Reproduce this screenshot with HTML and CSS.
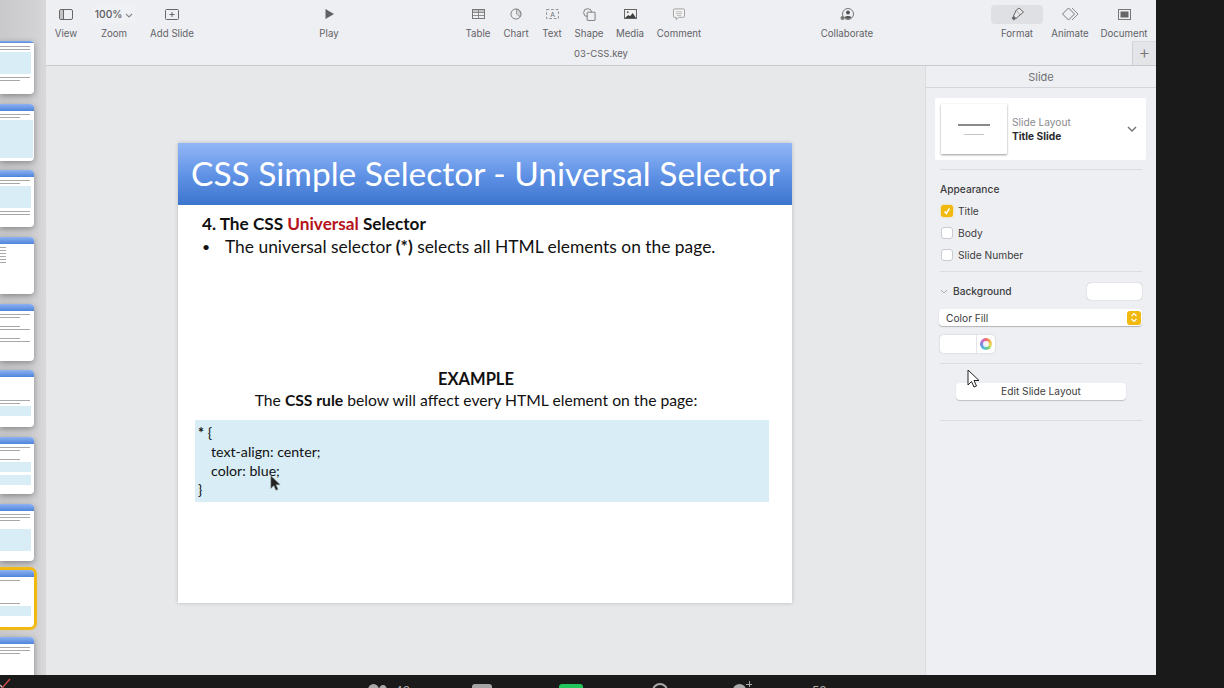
FILE: index.html
```html
<!DOCTYPE html>
<html>
<head>
    <title>03-CSS.key</title>
    <link rel="stylesheet" href="styles.css">
</head>
<body>
<div class="app">
    <!-- Slide navigator, thumbnails are cut off by the window on the left -->
    <div class="navigator">
        <div class="thumb thumb-first">
            <div class="thumb-head"></div>
            <div class="thumb-line"></div><div class="thumb-line"></div>
            <div class="thumb-box thumb-box-tall"></div>
            <div class="thumb-line"></div><div class="thumb-line short"></div>
        </div>
        <div class="thumb">
            <div class="thumb-head"></div>
            <div class="thumb-line"></div><div class="thumb-line short"></div>
            <div class="thumb-box thumb-box-big"></div>
        </div>
        <div class="thumb">
            <div class="thumb-head"></div>
            <div class="thumb-line"></div><div class="thumb-line short"></div>
            <div class="thumb-box thumb-box-tall"></div>
            <div class="thumb-line"></div><div class="thumb-line"></div>
        </div>
        <div class="thumb">
            <div class="thumb-head"></div>
            <div class="thumb-line tiny"></div><div class="thumb-line tiny"></div><div class="thumb-line tiny"></div>
            <div class="thumb-line tiny"></div><div class="thumb-line tiny"></div><div class="thumb-line tiny"></div>
        </div>
        <div class="thumb">
            <div class="thumb-head"></div>
            <div class="thumb-line"></div><div class="thumb-line short"></div>
            <div class="thumb-gap"></div>
            <div class="thumb-line short"></div><div class="thumb-line"></div>
            <div class="thumb-gap"></div>
            <div class="thumb-line short"></div><div class="thumb-line"></div>
        </div>
        <div class="thumb">
            <div class="thumb-head"></div>
            <div class="thumb-gap-big"></div>
            <div class="thumb-line"></div><div class="thumb-line short"></div>
            <div class="thumb-box thumb-box-small"></div>
        </div>
        <div class="thumb">
            <div class="thumb-head"></div>
            <div class="thumb-line"></div><div class="thumb-line short"></div>
            <div class="thumb-gap"></div>
            <div class="thumb-line short"></div>
            <div class="thumb-box thumb-box-small"></div>
            <div class="thumb-box thumb-box-small"></div>
        </div>
        <div class="thumb">
            <div class="thumb-head"></div>
            <div class="thumb-line"></div><div class="thumb-line"></div><div class="thumb-line short"></div>
            <div class="thumb-gap"></div>
            <div class="thumb-box thumb-box-tall"></div>
        </div>
        <div class="thumb thumb-selected">
            <div class="thumb-head"></div>
            <div class="thumb-line short"></div>
            <div class="thumb-gap-big"></div>
            <div class="thumb-line short"></div>
            <div class="thumb-box thumb-box-small"></div>
        </div>
        <div class="thumb">
            <div class="thumb-head"></div>
            <div class="thumb-line"></div><div class="thumb-line"></div><div class="thumb-line short"></div>
        </div>
    </div>

    <div class="work">
        <div class="toolbar">
            <div class="tools">
                <div class="tool tool-view">
                    <svg width="14" height="11" viewBox="0 0 14 11"><rect x=".5" y=".5" width="13" height="10" rx="1.5" fill="none" stroke="#666"/><rect x="1" y="1" width="3.5" height="9" fill="#c4c4c6"/><path d="M4.500 1v9" stroke="#666"/></svg>
                    <span>View</span>
                </div>
                <div class="tool tool-zoom">
                    <div class="zoom-box">100% <svg width="8" height="5" viewBox="0 0 8 5"><path d="M1 1l3 3 3-3" fill="none" stroke="#888" stroke-width="1.100"/></svg></div>
                    <span>Zoom</span>
                </div>
                <div class="tool tool-add">
                    <svg width="14" height="11" viewBox="0 0 14 11"><rect x=".5" y=".5" width="13" height="10" rx="1" fill="none" stroke="#666"/><path d="M7 3v5M4.500 5.500h5" stroke="#666"/></svg>
                    <span>Add Slide</span>
                </div>
                <div class="tool tool-play">
                    <svg width="9" height="10" viewBox="0 0 9 10"><path d="M.5 0l8.500 5-8.500 5z" fill="#626266"/></svg>
                    <span>Play</span>
                </div>
                <div class="tool tool-table">
                    <svg width="13" height="10" viewBox="0 0 13 10"><rect x=".5" y=".5" width="12" height="9" fill="none" stroke="#777"/><rect x="1" y="1" width="11" height="2" fill="#c4c4c6"/><path d="M.5 3.500h12M.5 6.500h12M6.500 .5v9" stroke="#777" stroke-width=".8"/></svg>
                    <span>Table</span>
                </div>
                <div class="tool tool-chart">
                    <svg width="12" height="12" viewBox="0 0 13 13"><circle cx="6.500" cy="6.500" r="5.500" fill="none" stroke="#777"/><path d="M7 1.500v5l3.600 2.800A5 5 0 0 0 7 1.500z" fill="#d4d4d6" stroke="#777" stroke-width=".7"/></svg>
                    <span>Chart</span>
                </div>
                <div class="tool tool-text">
                    <svg width="13" height="10" viewBox="0 0 14 11"><rect x=".5" y=".5" width="13" height="10" fill="none" stroke="#888" stroke-dasharray="3 2"/><text x="7" y="8.500" font-size="7.500" text-anchor="middle" fill="#666" font-family="Inter">A</text></svg>
                    <span>Text</span>
                </div>
                <div class="tool tool-shape">
                    <svg width="13" height="13" viewBox="0 0 14 14"><circle cx="5" cy="5" r="4.300" fill="none" stroke="#777"/><rect x="4.500" y="4.500" width="8.500" height="9" rx=".5" fill="#eeeff3" stroke="#777"/></svg>
                    <span>Shape</span>
                </div>
                <div class="tool tool-media">
                    <svg width="13" height="10" viewBox="0 0 14 11"><rect x=".5" y=".5" width="13" height="10" fill="#f2f2f2" stroke="#555"/><path d="M1 10l3.500-3.500 2 1.500 3-3.500 3.500 5.500z" fill="#3e3e40"/><circle cx="4" cy="3.500" r="1" fill="#555"/></svg>
                    <span>Media</span>
                </div>
                <div class="tool tool-comment">
                    <svg width="12" height="13" viewBox="0 0 13 13"><path d="M1.500 .5h10a1 1 0 0 1 1 1v7a1 1 0 0 1-1 1H6L3.500 12V9.500h-2a1 1 0 0 1-1-1v-7a1 1 0 0 1 1-1z" fill="#f6f6f6" stroke="#999"/><path d="M3 3.500h7M3 5.500h7M4 7.500h5" stroke="#aaa" stroke-width=".8"/></svg>
                    <span>Comment</span>
                </div>
                <div class="tool tool-collab">
                    <svg width="14" height="13" viewBox="0 0 14 13"><circle cx="8" cy="6" r="5.500" fill="none" stroke="#777"/><circle cx="8" cy="4.500" r="2" fill="#555"/><path d="M4.500 9.500c.5-2 6.500-2 7 0a5 5 0 0 1-7 0z" fill="#555"/><circle cx="2.500" cy="10" r="2" fill="#777"/></svg>
                    <span>Collaborate</span>
                </div>
                <div class="tool tool-format tool-active">
                    <svg width="13" height="14" viewBox="0 0 13 14"><path d="M8 1l4.500 4-3.500 3-4-4.500z" fill="#e8e8ea" stroke="#666"/><path d="M5 3.500L2.500 9 5 11.500 9 8" fill="#e8e8ea" stroke="#666"/><path d="M.5 11l2-2 2.500 2.500-2 2z" fill="#666"/></svg>
                    <span>Format</span>
                </div>
                <div class="tool tool-animate">
                    <svg width="17" height="14" viewBox="0 0 17 14"><path d="M10 1l6 6-6 6" fill="none" stroke="#888"/><path d="M6.500 1l6 6-6 6-6-6z" fill="#eeeff3" stroke="#777"/></svg>
                    <span>Animate</span>
                </div>
                <div class="tool tool-document">
                    <svg width="13" height="11" viewBox="0 0 13 11"><rect x=".5" y=".5" width="12" height="10" fill="none" stroke="#777"/><rect x="2.500" y="2.500" width="8" height="6" fill="#666"/></svg>
                    <span>Document</span>
                </div>
            </div>
            <div class="file-row">
                <div class="file-name">03-CSS.key</div>
                <div class="add-tab">+</div>
            </div>
        </div>

        <div class="main">
            <div class="canvas">
                <div class="slide">
                    <div class="slide-title">CSS Simple Selector - Universal Selector</div>
                    <div class="slide-body">
                        <div class="slide-heading">4. The CSS <span class="red">Universal</span> Selector</div>
                        <div class="slide-bullet"><span class="bullet">•</span><span>The universal selector <b>(*)</b> selects all HTML elements on the page.</span></div>
                        <div class="slide-example">
                            <div class="example-title">EXAMPLE</div>
                            <div class="example-text">The <b>CSS rule</b> below will affect every HTML element on the page:</div>
                        </div>
                        <div class="code-box">
                            <div><b>*</b> {</div>
                            <div class="code-indent">text-align: center;</div>
                            <div class="code-indent">color: blue;</div>
                            <div>}</div>
                        </div>
                    </div>
                </div>
            </div>

            <div class="inspector">
                <div class="panel-title">Slide</div>
                <div class="layout-card">
                    <div class="layout-thumb">
                        <div class="layout-thumb-a"></div>
                        <div class="layout-thumb-b"></div>
                    </div>
                    <div class="layout-names">
                        <div class="layout-label">Slide Layout</div>
                        <div class="layout-name">Title Slide</div>
                    </div>
                    <svg width="10" height="7" viewBox="0 0 10 7"><path d="M1 1l4 4 4-4" fill="none" stroke="#777" stroke-width="1.500"/></svg>
                </div>
                <div class="divider divider-first"></div>

                <div class="section-title">Appearance</div>
                <div class="check-row"><span class="check check-on"><svg width="8" height="8" viewBox="0 0 8 8"><path d="M1.500 4.500l1.800 2L6.500 1.500" fill="none" stroke="#fff" stroke-width="1.500"/></svg></span>Title</div>
                <div class="check-row"><span class="check"></span>Body</div>
                <div class="check-row"><span class="check"></span>Slide Number</div>
                <div class="divider divider-checks"></div>

                <div class="background-row">
                    <svg width="8" height="5" viewBox="0 0 8 5"><path d="M1 1l3 3 3-3" fill="none" stroke="#aaa"/></svg>
                    <span class="section-name">Background</span>
                    <span class="swatch"></span>
                </div>
                <div class="select-box">
                    <span>Color Fill</span>
                    <span class="stepper"><svg width="8" height="11" viewBox="0 0 8 11"><path d="M1.500 4L4 1.500 6.500 4M1.500 7L4 9.500 6.500 7" fill="none" stroke="#fff" stroke-width="1.200"/></svg></span>
                </div>
                <div class="color-well">
                    <span class="well-color"></span>
                    <span class="well-wheel"><span class="wheel"></span></span>
                </div>
                <div class="divider divider-well"></div>
                <div class="edit-button">Edit Slide Layout</div>
                <div class="divider divider-button"></div>
            </div>
        </div>
    </div>
</div>

<!-- Meeting controls, mostly below the edge of the recording -->
<div class="meeting-bar">
    <svg class="slash" width="12" height="13" viewBox="0 0 12 13"><path d="M0 10l3 3" stroke="#bbb" stroke-width="1.500"/><path d="M2 13l8-9" fill="none" stroke="#c9474c" stroke-width="1.500"/></svg>
    <span class="meet-people"></span>
    <span class="meet-count">43</span>
    <span class="meet-gray"></span>
    <span class="meet-green"></span>
    <span class="meet-ring"></span>
    <span class="meet-person"></span>
    <span class="meet-num">58</span>
</div>

<!-- Mouse pointers in the recording -->
<svg class="cursor cursor-panel" width="13" height="19" viewBox="0 0 13 19"><path d="M1 1v15l3.500-3.500 2.500 5.500 2.500-1-2.500-5.500h5z" fill="#fff" stroke="#222"/></svg>
<svg class="cursor cursor-slide" width="11" height="16" viewBox="0 0 13 19"><path d="M1 1v15l3.500-3.500 2.500 5.500 2.500-1-2.500-5.500h5z" fill="#222" stroke="#888" stroke-width=".6"/></svg>
</body>
</html>
```
FILE: styles.css
```css
body {
    margin: 0;
    width: 1224px;
    height: 688px;
    overflow: hidden;
    position: relative;
    background-color: #1a1a1a;
    font-family: Inter, "Liberation Sans", sans-serif;
    color: #333;
}

.app {
    display: flex;
    width: 1156px;
    height: 675px;
    overflow: hidden;
}

/* Slide navigator */
.navigator {
    width: 46px;
    flex-shrink: 0;
    box-sizing: border-box;
    padding-top: 41px;
    display: flex;
    flex-direction: column;
    gap: 9.67px;
    overflow: hidden;
    background: linear-gradient(90deg, #c9c9cb, #d2d2d4 80%, #d9d9dc);
}

.thumb {
    width: 34px;
    height: 57px;
    flex-shrink: 0;
    background-color: #fff;
    border-radius: 0 4px 4px 0;
    box-shadow: 0 2px 6px rgba(0, 0, 0, 0.35);
    overflow: hidden;
}

.thumb > * {
    filter: blur(0.4px);
}

.thumb-first {
    height: 53px;
}

.thumb-selected {
    box-shadow: 0 0 1px 3px #f1b80e;
}

.thumb-head {
    height: 7px;
    margin-bottom: 3px;
    background: linear-gradient(#8db2f3, #4f84da);
}

.thumb-first .thumb-head {
    height: 2px;
}

.thumb-line {
    height: 1px;
    width: 30px;
    margin-bottom: 2px;
    background-color: #a8a8a8;
}

.thumb-line.short {
    width: 20px;
}

.thumb-line.tiny {
    width: 6px;
}

.thumb-gap {
    height: 6px;
}

.thumb-gap-big {
    height: 20px;
}

.thumb-box {
    width: 31px;
    margin-bottom: 3px;
    background-color: #d8edf5;
}

.thumb-box-small {
    height: 10px;
}

.thumb-box-tall {
    height: 22px;
}

.thumb-box-big {
    width: 33px;
    height: 38px;
}

/* Toolbar */
.work {
    flex: 1;
    display: flex;
    flex-direction: column;
    min-width: 0;
}

.toolbar {
    height: 66px;
    box-sizing: border-box;
    flex-shrink: 0;
    background-color: #eeeff3;
    border-bottom: 1px solid #c9cacd;
}

.tools {
    display: flex;
    height: 41px;
}

.tool {
    display: grid;
    grid-template-rows: 18px 14px;
    row-gap: 3px;
    justify-items: center;
    align-items: center;
    flex-shrink: 0;
    height: 41px;
    box-sizing: border-box;
    padding-top: 5px;
    position: relative;
    font-size: 9.700px;
    white-space: nowrap;
    color: #636367;
}

.tool-view { width: 40px; }
.tool-zoom { width: 56px; }
.tool-add { width: 60px; }
.tool-play { width: 40px; margin-left: 107px; }
.tool-table { width: 38px; margin-left: 110px; }
.tool-chart { width: 38px; }
.tool-text { width: 34px; }
.tool-shape { width: 40px; }
.tool-media { width: 42px; }
.tool-comment { width: 56px; }
.tool-collab { width: 70px; margin-left: 105px; }
.tool-format { width: 52px; margin-left: 109px; }
.tool-animate { width: 54px; }
.tool-document { width: 54px; }

.tool-active::before {
    content: "";
    position: absolute;
    top: 5px;
    left: 0;
    width: 52px;
    height: 19px;
    border-radius: 4px;
    background-color: #dfe0e4;
}

.tool-active > * {
    position: relative;
}

.zoom-box {
    width: 42px;
    height: 18px;
    border-radius: 3px;
    background-color: #f0f1f4;
    font-size: 10.300px;
    font-weight: 500;
    line-height: 18px;
    text-align: center;
    color: #5a5a5e;
}

.file-row {
    height: 24px;
    display: flex;
    justify-content: center;
    position: relative;
}

.file-name {
    font-size: 9.500px;
    line-height: 25px;
    color: #636367;
}

.add-tab {
    position: absolute;
    right: 0;
    top: 0;
    width: 24px;
    height: 24px;
    box-sizing: border-box;
    border-left: 1px solid #cfd0d3;
    border-top: 1px solid #d8d9dc;
    background-color: #e4e5e9;
    font-size: 18px;
    font-weight: 300;
    line-height: 22px;
    text-align: center;
    color: #777;
}

/* Canvas and slide */
.main {
    flex: 1;
    display: flex;
    min-height: 0;
}

.canvas {
    width: 879px;
    flex-shrink: 0;
    box-sizing: border-box;
    padding-top: 77px;
    background-color: #e6e8ea;
}

.slide {
    width: 614px;
    height: 460px;
    margin-left: 132px;
    background-color: #fff;
    box-shadow: 0 0 4px rgba(0, 0, 0, 0.2);
    font-family: Lato, "Open Sans", sans-serif;
    color: #111;
}

.slide-title {
    height: 62px;
    box-sizing: border-box;
    padding-left: 13px;
    background: linear-gradient(#93b7f7, #5d90e4 55%, #3c75cd);
    color: #fff;
    font-size: 33.500px;
    line-height: 60px;
    white-space: nowrap;
}

.slide-body {
    padding: 9px 0 0 17px;
}

.slide-heading {
    margin-left: 7px;
    font-size: 17.200px;
    font-weight: 700;
    line-height: 19px;
}

.red {
    color: #b5121b;
}

.slide-bullet {
    display: flex;
    margin: 4px 0 0 7px;
    font-size: 17.400px;
    line-height: 20px;
    white-space: nowrap;
}

.bullet {
    width: 23px;
    font-size: 14px;
}

.slide-example {
    width: 562px;
    margin-top: 112px;
    text-align: center;
}

.example-title {
    font-size: 16.500px;
    font-weight: 700;
    line-height: 20px;
}

.example-text {
    margin-top: 1px;
    font-size: 15.700px;
    line-height: 20px;
    white-space: nowrap;
}

.code-box {
    width: 574px;
    height: 82px;
    box-sizing: border-box;
    margin-top: 10px;
    padding: 3px 0 0 3px;
    background-color: #d8edf5;
    font-size: 14.200px;
    line-height: 19px;
}

.code-indent {
    padding-left: 13px;
}

/* Inspector */
.inspector {
    flex: none;
    width: 231px;
    box-sizing: border-box;
    padding: 0 14px;
    background-color: #eeeff3;
    border-left: 1px solid #dcdde0;
    font-size: 10.200px;
    color: #3c3c40;
}

.panel-title {
    height: 21px;
    margin: 0 -14px;
    border-bottom: 1px solid #d4d5d8;
    font-size: 11px;
    line-height: 22px;
    text-align: center;
    color: #707074;
}

.layout-card {
    display: flex;
    align-items: center;
    width: 211px;
    height: 62px;
    box-sizing: border-box;
    margin: 10px 0 0 -5px;
    padding: 0 9px 0 6px;
    background-color: #fff;
    border-radius: 2px;
}

.layout-thumb {
    width: 66px;
    height: 50px;
    flex-shrink: 0;
    box-sizing: border-box;
    padding-top: 20px;
    background-color: #fff;
    box-shadow: 0 1px 2px rgba(0, 0, 0, 0.4);
}

.layout-thumb-a {
    width: 32px;
    height: 2px;
    margin: 0 auto 8px;
    background-color: #8a8a8a;
}

.layout-thumb-b {
    width: 20px;
    height: 1px;
    margin: 0 auto;
    background-color: #c4c4c4;
}

.layout-names {
    flex: 1;
    margin-left: 5px;
    line-height: 14px;
}

.layout-label {
    color: #8a8a8e;
}

.layout-name {
    font-weight: 700;
    color: #2a2a2e;
}

.divider {
    height: 1px;
    background-color: #dcdde0;
}

.divider-first {
    margin-top: 9px;
}

.section-title {
    margin-top: 12px;
    font-weight: 500;
    line-height: 14px;
}

.check-row {
    display: flex;
    align-items: center;
    gap: 5px;
    height: 22px;
}

.section-title + .check-row {
    margin-top: 4px;
}

.check {
    display: flex;
    align-items: center;
    justify-content: center;
    width: 12px;
    height: 12px;
    box-sizing: border-box;
    margin-left: 1px;
    border: 1px solid #c9cacd;
    border-radius: 3px;
    background-color: #fff;
}

.check-on {
    border: none;
    background-color: #f1b80e;
    box-shadow: 0 0 2px rgba(241, 184, 14, 0.7);
}

.divider-checks {
    margin-top: 5px;
}

.background-row {
    display: flex;
    align-items: center;
    height: 18px;
    margin-top: 10px;
}

.section-name {
    flex: 1;
    margin-left: 5px;
    font-weight: 500;
}

.swatch {
    width: 55px;
    height: 17px;
    border-radius: 4px;
    background-color: #fff;
    box-shadow: 0 0 1px rgba(0, 0, 0, 0.4);
}

.select-box {
    display: flex;
    align-items: center;
    justify-content: space-between;
    width: 203px;
    height: 17px;
    box-sizing: border-box;
    margin: 9px 0 0 -1px;
    padding: 0 1px 0 7px;
    border-radius: 4px;
    background-color: #fff;
    box-shadow: 0 1px 1px rgba(0, 0, 0, 0.25);
}

.stepper {
    display: flex;
    align-items: center;
    justify-content: center;
    width: 14px;
    height: 14px;
    border-radius: 3px;
    background-color: #f1b80e;
}

.color-well {
    display: flex;
    width: 55px;
    height: 18px;
    margin-top: 9px;
    border-radius: 4px;
    background-color: #fff;
    box-shadow: 0 0 2px rgba(0, 0, 0, 0.2);
}

.well-color {
    width: 36px;
    border-right: 1px solid #e4e4e6;
}

.well-wheel {
    flex: 1;
    display: flex;
    align-items: center;
    justify-content: center;
}

.wheel {
    display: flex;
    align-items: center;
    justify-content: center;
    width: 12px;
    height: 12px;
    border-radius: 50%;
    background: conic-gradient(#f0686b, #f2b04d, #e7de5a, #76d07a, #59c3dc, #6f8ee8, #c06fd8, #f0686b);
}

.wheel::after {
    content: "";
    width: 6px;
    height: 6px;
    border-radius: 50%;
    background-color: #f4f4f6;
}

.divider-well {
    margin-top: 10px;
}

.edit-button {
    width: 170px;
    height: 17px;
    margin: 19px 0 0 16px;
    border-radius: 4px;
    background-color: #fff;
    box-shadow: 0 1px 1px rgba(0, 0, 0, 0.2);
    line-height: 17px;
    text-align: center;
}

.divider-button {
    margin-top: 20px;
}

/* Meeting bar */
.meeting-bar {
    height: 13px;
    position: relative;
    overflow: hidden;
    background-color: #1a1a1a;
    font-size: 12px;
    color: #aaa;
}

.slash {
    position: absolute;
    left: 0;
    top: 0;
}

.meet-people,
.meet-gray,
.meet-green,
.meet-ring,
.meet-person {
    position: absolute;
    top: 9px;
    height: 12px;
}

.meet-people {
    left: 368px;
    width: 11px;
    border-radius: 50%;
    background-color: #a8a8a8;
}

.meet-people::after {
    content: "";
    position: absolute;
    left: 11px;
    top: 1px;
    width: 8px;
    height: 10px;
    border-radius: 50%;
    background-color: #a8a8a8;
}

.meet-count {
    position: absolute;
    left: 395px;
    top: 9px;
    line-height: 14px;
}

.meet-gray {
    left: 472px;
    width: 20px;
    border-radius: 3px;
    background-color: #a4a4a4;
}

.meet-green {
    left: 559px;
    width: 24px;
    border-radius: 3px;
    background-color: #22c55a;
}

.meet-ring {
    left: 652px;
    width: 16px;
    top: 8px;
    height: 16px;
    box-sizing: border-box;
    border: 2px solid #a8a8a8;
    border-radius: 50%;
}

.meet-person {
    left: 733px;
    width: 13px;
    border-radius: 50%;
    background-color: #a8a8a8;
}

.meet-person::after {
    content: "";
    position: absolute;
    left: 13px;
    top: -3px;
    width: 6px;
    height: 6px;
    background:
        linear-gradient(#a8a8a8, #a8a8a8) center / 6px 1px no-repeat,
        linear-gradient(#a8a8a8, #a8a8a8) center / 1px 6px no-repeat;
}

.meet-num {
    position: absolute;
    left: 812px;
    top: 9px;
    line-height: 14px;
}

/* Pointers over the content */
.cursor {
    position: absolute;
}

.cursor-panel {
    left: 967px;
    top: 369px;
}

.cursor-slide {
    left: 270px;
    top: 475px;
}
```
